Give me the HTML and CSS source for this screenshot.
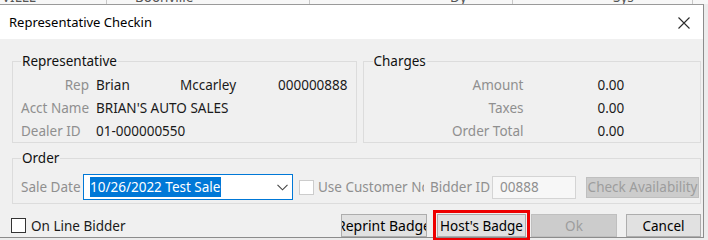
FILE: index.html
```html
<!DOCTYPE html>
<html>
<head>
    <title>Representative Checkin</title>
    <link rel="stylesheet" href="styles.css">
</head>
<body>
    <div class="strip">
        <div class="strip-row">
            <span class="cell c1">VILLE</span>
            <span class="cell c2">Boonville</span>
            <span class="cell c3">Dy</span>
            <span class="cell c4">Sys</span>
        </div>
    </div>

    <div class="dialog">
        <div class="titlebar">
            <span class="title">Representative Checkin</span>
            <svg class="close" width="12" height="12" viewBox="0 0 12 12">
                <path d="M0.5 0.5 L11.5 11.5 M11.5 0.5 L0.5 11.5" stroke="#2b2b2b" stroke-width="1.1" fill="none"/>
            </svg>
        </div>

        <div class="content">
            <div class="top-groups">
                <fieldset class="group rep">
                    <legend>Representative</legend>
                    <div class="row">
                        <span class="lbl">Rep</span>
                        <span class="val first">Brian</span>
                        <span class="val last">Mccarley</span>
                        <span class="val">000000888</span>
                    </div>
                    <div class="row">
                        <span class="lbl">Acct Name</span>
                        <span class="val">BRIAN'S AUTO SALES</span>
                    </div>
                    <div class="row">
                        <span class="lbl left">Dealer ID</span>
                        <span class="val">01-000000550</span>
                    </div>
                </fieldset>

                <fieldset class="group charges">
                    <legend>Charges</legend>
                    <div class="row">
                        <span class="lbl wide">Amount</span>
                        <span class="val money">0.00</span>
                    </div>
                    <div class="row">
                        <span class="lbl wide">Taxes</span>
                        <span class="val money">0.00</span>
                    </div>
                    <div class="row">
                        <span class="lbl wide">Order Total</span>
                        <span class="val money">0.00</span>
                    </div>
                </fieldset>
            </div>

            <fieldset class="group order">
                <legend>Order</legend>
                <div class="order-row">
                    <span class="lbl sale-lbl">Sale Date</span>
                    <div class="combo">
                        <span class="selected">10/26/2022 Test Sale</span>
                        <svg class="chevron" width="11" height="7" viewBox="0 0 11 7">
                            <path d="M0.5 0.8 L5.5 5.8 L10.5 0.8" stroke="#444" stroke-width="1.1" fill="none"/>
                        </svg>
                    </div>
                    <span class="check disabled"></span>
                    <span class="lbl use-cust">Use Customer No</span>
                    <span class="lbl bidder-lbl">Bidder ID</span>
                    <div class="textbox">00888</div>
                    <div class="btn disabled check-btn"><span>Check Availability</span></div>
                </div>
            </fieldset>

            <div class="footer">
                <span class="check online"></span>
                <span class="online-lbl">On Line Bidder</span>
                <div class="buttons">
                    <div class="btn reprint"><span>Reprint Badge</span></div>
                    <div class="btn host"><span>Host's Badge</span></div>
                    <div class="btn disabled ok"><span>Ok</span></div>
                    <div class="btn cancel"><span>Cancel</span></div>
                </div>
            </div>
        </div>
    </div>
</body>
</html>
```

FILE: styles.css
```css
* {
    margin: 0;
    padding: 0;
    box-sizing: border-box;
}
body {
    width: 708px;
    height: 240px;
    overflow: hidden;
    background: #ececec;
    font-family: "Noto Sans", "Open Sans", sans-serif;
    font-size: 13.5px;
    color: #1a1a1a;
}
.strip {
    height: 4px;
    overflow: hidden;
    background: #f7f7f7;
}
.strip-row {
    display: flex;
    margin-top: -10px;
    height: 14px;
    line-height: 14px;
    color: #555;
}
.cell {
    border-right: 1px solid #c8c8c8;
    padding-left: 2px;
}
.c1 { width: 107px; }
.c2 { width: 203px; padding-left: 28px; }
.c3 { width: 203px; padding-left: 140px; }
.c4 { width: 180px; padding-left: 100px; }

.dialog {
    width: 704px;
    background: #f0f0f0;
    border-top: 1px solid #9a9a9a;
    border-right: 1px solid #8c8c8c;
    border-bottom: 1px solid #8c8c8c;
}
.titlebar {
    height: 34px;
    background: #fff;
    display: flex;
    align-items: center;
    padding-left: 9px;
    padding-right: 13px;
}
.title {
    flex: 1;
    font-size: 13px;
    color: #000;
}
.close {
    display: block;
    margin-top: 1px;
}
.content {
    padding: 13px 2px 0 12px;
}
.top-groups {
    display: flex;
    gap: 6px;
}
.group {
    border: 1px solid #dcdcdc;
    padding: 3px 8px 0 8px;
}
.group legend {
    line-height: 18px;
    padding: 0 1px;
    color: #111;
}
.rep {
    width: 344px;
}
.charges {
    width: 340px;
    padding-left: 9px;
}
.row {
    display: flex;
    align-items: center;
    height: 23px;
    white-space: nowrap;
}
.lbl {
    color: #8f8f8f;
    white-space: nowrap;
}
.row .lbl {
    width: 68px;
    text-align: right;
    margin-right: 7px;
}
.row .lbl.left {
    text-align: left;
}
.row .lbl.wide {
    width: 151px;
    margin-right: 74px;
}
.val.first {
    width: 84px;
}
.val.last {
    width: 98px;
}

.order {
    margin-top: 6px;
    padding: 7px 0 3px 8px;
}
.order-row {
    display: flex;
    align-items: center;
    height: 26px;
}
.sale-lbl {
    width: 62px;
}
.combo {
    width: 210px;
    height: 26px;
    border: 1px solid #0078d7;
    background: #fff;
    display: flex;
    align-items: center;
    padding-left: 6px;
    padding-right: 4px;
}
.selected {
    flex: none;
    background: #0078d7;
    color: #fff;
    line-height: 20px;
    padding-right: 1px;
}
.chevron {
    margin-left: auto;
    display: block;
}
.check {
    width: 15px;
    height: 15px;
    border: 1px solid #333;
    background: #fff;
    flex: none;
}
.check.disabled {
    border-color: #cccccc;
    margin-left: 6px;
}
.use-cust {
    width: 106px;
    overflow: hidden;
    margin-left: 4px;
}
.bidder-lbl {
    width: 62px;
    margin-left: 6px;
}
.textbox {
    width: 84px;
    height: 23px;
    border: 1px solid #d4d4d4;
    background: #f7f7f7;
    color: #8f8f8f;
    padding-left: 7px;
    line-height: 21px;
}
.btn {
    height: 23px;
    border: 1px solid #adadad;
    background: #e1e1e1;
    color: #000;
    display: flex;
    align-items: center;
    justify-content: center;
    overflow: hidden;
    white-space: nowrap;
    flex: none;
}
.btn span {
    flex: none;
}
.btn.disabled {
    background: #cccccc;
    border-color: #bfbfbf;
    color: #9d9d9d;
}
.check-btn {
    width: 113px;
    height: 21px;
    margin-left: 10px;
}

.footer {
    display: flex;
    align-items: center;
    height: 23px;
    margin-top: 10px;
}
.check.online {
    margin-left: -1px;
}
.online-lbl {
    margin-left: 5px;
}
.buttons {
    margin-left: auto;
    display: flex;
}
.reprint {
    width: 86px;
    font-size: 14px;
}
.host {
    width: 89px;
    margin-left: 10px;
    outline: 3px solid #ee0000;
    outline-offset: 1px;
}
.ok {
    width: 86px;
    margin-left: 5px;
}
.cancel {
    width: 75px;
    margin-left: 9px;
}
```
